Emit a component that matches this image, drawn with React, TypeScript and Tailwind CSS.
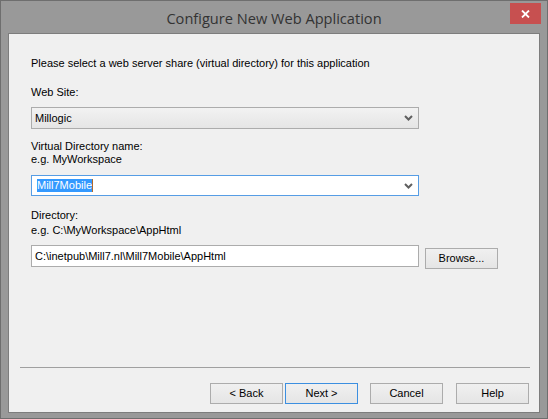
import React from 'react';

function Chevron() {
  return (
    <svg width="9" height="6" viewBox="0 0 9 6" className="shrink-0">
      <path d="M1 1 L4.5 4.5 L8 1" fill="none" stroke="#5f5f5f" strokeWidth="2" />
    </svg>
  );
}

function Btn({ label, primary }: { label: string; primary?: boolean }) {
  return (
    <button
      className={
        'w-[73px] h-[21px] flex items-center justify-center text-[11px] text-black bg-gradient-to-b from-[#f0f0f0] to-[#e5e5e5] border ' +
        (primary ? 'border-[#3c8fe0]' : 'border-[#acacac]')
      }
    >
      {label}
    </button>
  );
}

export default function App() {
  return (
    <div className="w-[548px] h-[419px] bg-[#999999] border border-[#6e6e6e] flex flex-col font-['Liberation_Sans',Arial,sans-serif] text-[11px] leading-[13px] text-black">
      <div className="relative h-[32px] flex items-center justify-center">
        <span className="text-[14.6px] leading-[20px] text-[#333333] font-['Open_Sans',sans-serif] mt-[1px]">
          Configure New Web Application
        </span>
        <div className="absolute right-[6px] top-[2px] w-[31px] h-[21px] bg-[#c75050] flex items-center justify-center">
          <svg width="9" height="8" viewBox="0 0 9 8">
            <path d="M1 0.5 L8 7.5 M8 0.5 L1 7.5" stroke="#ffffff" strokeWidth="1.8" />
          </svg>
        </div>
      </div>

      <div className="mx-[7px] h-[380px] bg-[#f0f0f0] border border-[#7d7d7d] flex flex-col">
        <div className="pl-[22px] flex flex-col">
          <p className="mt-[23px]">Please select a web server share (virtual directory) for this application</p>
          <p className="mt-[16px]">Web Site:</p>
          <div className="mt-[8px] w-[388px] h-[22px] border border-[#acacac] bg-gradient-to-b from-[#f2f2f2] to-[#e5e5e5] flex items-center justify-between pl-[3px] pr-[5px]">
            <span>Millogic</span>
            <Chevron />
          </div>
          <p className="mt-[11px]">Virtual Directory name:</p>
          <p>e.g. MyWorkspace</p>
          <div className="mt-[9px] w-[388px] h-[21px] border border-[#569de5] bg-white flex items-center justify-between pl-[5px] pr-[5px]">
            <span className="flex items-center">
              <span className="bg-[#3399ff] text-white leading-[13px]">Mill7Mobile</span>
              <span className="w-[1px] h-[13px] bg-[#b06a2a]" />
            </span>
            <Chevron />
          </div>
          <p className="mt-[13px]">Directory:</p>
          <p className="mt-[2px]">e.g. C:\MyWorkspace\AppHtml</p>
          <div className="mt-[8px] flex items-start gap-[6px]">
            <div className="w-[388px] h-[22px] border border-[#acacac] bg-white flex items-center pl-[3px]">
              C:\inetpub\Mill7.nl\Mill7Mobile\AppHtml
            </div>
            <div className="mt-[3px]">
              <Btn label="Browse..." />
            </div>
          </div>
        </div>

        <div className="mt-[98px] ml-[11px] mr-[9px] h-[1px] bg-[#a0a0a0]" />

        <div className="mt-[15px] pr-[10px] flex justify-end">
          <Btn label="< Back" />
          <div className="ml-[2px]">
            <Btn label="Next >" primary />
          </div>
          <div className="ml-[12px]">
            <Btn label="Cancel" />
          </div>
          <div className="ml-[13px]">
            <Btn label="Help" />
          </div>
        </div>
      </div>
    </div>
  );
}
